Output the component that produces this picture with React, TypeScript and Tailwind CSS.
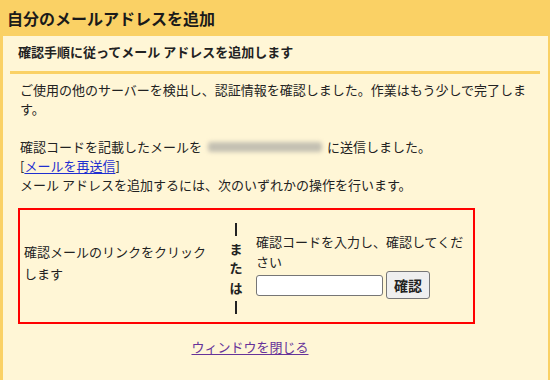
import React from "react";

export default function App() {
  const font = { fontFamily: '"Noto Sans CJK JP", "Noto Sans", sans-serif' };
  return (
    <div className="w-[550px] h-[380px] bg-[#fff6d6] text-[#222] overflow-hidden flex flex-col" style={font}>
      <div className="h-[36px] shrink-0 bg-[#fad165] pl-[7px] flex items-center">
        <h1 className="text-[16px] font-bold leading-[20px] text-[#1a1a1a]">自分のメールアドレスを追加</h1>
      </div>
      <div className="flex-1 border-l-[3px] border-r-[2px] border-[#fad165] pl-[7px] pr-[8px]">
        <div className="pt-[7px] pb-[10px] pl-[8px] text-[13px] font-bold leading-[18px]">
          確認手順に従ってメール アドレスを追加します
        </div>
        <div className="h-[3px] bg-[#fad165]" />
        <div className="pl-[8px] pt-[6px]">
          <div className="pl-[2px] w-[512px] text-[13px] leading-[19px]">
            <p>ご使用の他のサーバーを検出し、認証情報を確認しました。作業はもう少しで完了します。</p>
            <p className="h-[19px]" />
            <p className="flex items-center">
              <span>確認コードを記載したメールを</span>
              <span className="inline-block w-[114px] h-[10px] ml-[6px] mr-[5px] rounded-[3px] bg-[#c4c0b2] blur-[2px]" />
              <span>に送信しました。</span>
            </p>
            <p>
              [<a href="#" className="text-[#1f2fd0] underline underline-offset-2">メールを再送信</a>]
            </p>
            <p>メール アドレスを追加するには、次のいずれかの操作を行います。</p>
          </div>
          <div className="mt-[14px] w-[457px] h-[116px] border-2 border-[#ff0000] flex items-center pl-[4px] text-[13px]">
            <div className="w-[190px] leading-[22px] pb-[6px]">確認メールのリンクをクリックします</div>
            <div className="ml-[11px] w-[22px] flex flex-col items-center font-bold leading-[19.5px] pt-[4px]">
              <span className="h-[19.5px] flex items-center"><span className="block w-[2px] h-[13px] bg-[#222]" /></span>
              <span>ま</span>
              <span>た</span>
              <span>は</span>
              <span className="h-[19.5px] flex items-center"><span className="block w-[2px] h-[13px] bg-[#222]" /></span>
            </div>
            <div className="ml-[9px] w-[214px] pb-[1px]">
              <div className="leading-[20px]">確認コードを入力し、確認してください</div>
              <div className="flex items-center gap-[3px] mt-[-1px]">
                <input
                  type="text"
                  className="w-[127px] h-[21px] bg-white border border-[#767676] rounded-[3px] outline-none"
                />
                <button className="w-[44px] h-[28px] bg-[#efefef] border border-[#767676] rounded-[3px] font-bold text-[14px] text-[#222]">
                  確認
                </button>
              </div>
            </div>
          </div>
          <div className="w-[464px] flex justify-center mt-[13px] text-[13px] leading-[19px]">
            <a href="#" className="text-[#663399] underline underline-offset-2">ウィンドウを閉じる</a>
          </div>
        </div>
      </div>
    </div>
  );
}
